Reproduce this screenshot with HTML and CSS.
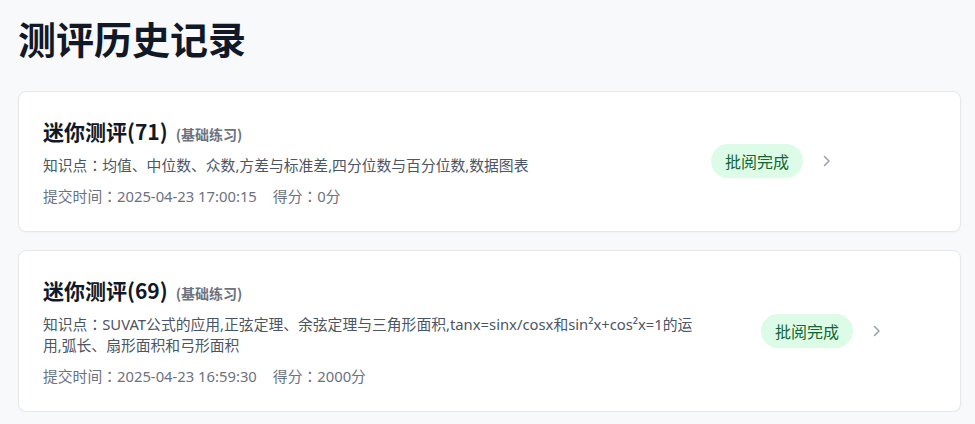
FILE: index.html
```html
<!DOCTYPE html>
<html lang="zh-CN">
<head>
<meta charset="utf-8">
<title>测评历史记录</title>
<link rel="stylesheet" href="styles.css">
</head>
<body>
<main class="page">
  <h1 class="page-title">测评历史记录</h1>
  <ul class="record-list">
    <li class="record-card">
      <div class="record-info record-info--short">
        <div class="record-head">
          <span class="record-name">迷你测评(71)</span>
          <span class="record-type">(基础练习)</span>
        </div>
        <p class="record-topics">知识点<span class="colon" lang="zh-TW">：</span>均值、中位数、众数,方差与标准差,四分位数与百分位数,数据图表</p>
        <p class="record-meta"><span>提交时间<span class="colon" lang="zh-TW">：</span>2025-04-23 17:00:15</span><span class="record-score">得分<span class="colon" lang="zh-TW">：</span>0分</span></p>
      </div>
      <div class="record-side">
        <span class="status-badge">批阅完成</span>
        <svg class="chevron" width="8" height="12" viewBox="0 0 8 12" aria-hidden="true"><path d="M1.5 1.5 L6 6 L1.5 10.5" fill="none" stroke="currentColor" stroke-width="1.6" stroke-linecap="round" stroke-linejoin="round"/></svg>
      </div>
    </li>
    <li class="record-card">
      <div class="record-info record-info--long">
        <div class="record-head">
          <span class="record-name">迷你测评(69)</span>
          <span class="record-type">(基础练习)</span>
        </div>
        <p class="record-topics">知识点<span class="colon" lang="zh-TW">：</span>SUVAT公式的应用,正弦定理、余弦定理与三角形面积,tanx=sinx/cosx和sin²x+cos²x=1的运用,弧长、扇形面积和弓形面积</p>
        <p class="record-meta"><span>提交时间<span class="colon" lang="zh-TW">：</span>2025-04-23 16:59:30</span><span class="record-score">得分<span class="colon" lang="zh-TW">：</span>2000分</span></p>
      </div>
      <div class="record-side">
        <span class="status-badge">批阅完成</span>
        <svg class="chevron" width="8" height="12" viewBox="0 0 8 12" aria-hidden="true"><path d="M1.5 1.5 L6 6 L1.5 10.5" fill="none" stroke="currentColor" stroke-width="1.6" stroke-linecap="round" stroke-linejoin="round"/></svg>
      </div>
    </li>
  </ul>
</main>
</body>
</html>
```
FILE: styles.css
```css
* { box-sizing: border-box; }
html, body { margin: 0; padding: 0; }
body {
  background: #f8f9fb;
  font-family: "Noto Sans", "Noto Sans CJK SC", sans-serif;
  color: #111827;
}
.page {
  padding: 16px 14px 0 18px;
}
.page-title {
  margin: 0 0 31px;
  font-family: "Noto Sans CJK SC", sans-serif;
  font-size: 38px;
  line-height: 44px;
  font-weight: 700;
  color: #111827;
}
.record-list {
  list-style: none;
  margin: 0;
  padding: 0;
  display: flex;
  flex-direction: column;
  gap: 18px;
}
.record-card {
  display: flex;
  align-items: center;
  gap: 56px;
  background: #fff;
  border: 1px solid #e5e7eb;
  border-radius: 8px;
  padding: 24px;
  box-shadow: 0 1px 2px rgba(0,0,0,0.03);
}
.record-info { flex: 0 0 auto; }
.record-info--short { width: 612px; }
.record-info--long { width: 662px; }
.record-head {
  display: flex;
  align-items: baseline;
  height: 31px;
}
.record-name {
  font-family: "Noto Sans CJK SC", sans-serif;
  font-size: 21px;
  line-height: 31px;
  font-weight: 700;
  color: #111827;
}
.record-type {
  margin-left: 8px;
  font-family: "Noto Sans CJK SC", sans-serif;
  font-size: 14px;
  font-weight: 700;
  color: #6b7280;
}
.record-topics {
  margin: 8px 0 0;
  font-size: 14.8px;
  line-height: 21.5px;
  color: #4b5563;
}
.record-meta {
  margin: 8px 0 0;
  font-size: 14.8px;
  line-height: 22px;
  color: #6b7280;
}
.colon {
  display: inline-block;
  font-family: "Noto Sans CJK TC", sans-serif;
  line-height: 1;
}
.record-score { margin-left: 16px; }
.record-side {
  display: flex;
  align-items: center;
  gap: 20px;
}
.status-badge {
  background: #dcfce7;
  color: #166534;
  font-family: "Noto Sans CJK SC", sans-serif;
  font-size: 16px;
  line-height: 24px;
  padding: 5px 14px;
  border-radius: 999px;
  white-space: nowrap;
}
.chevron { color: #9ca3af; display: block; }
```
